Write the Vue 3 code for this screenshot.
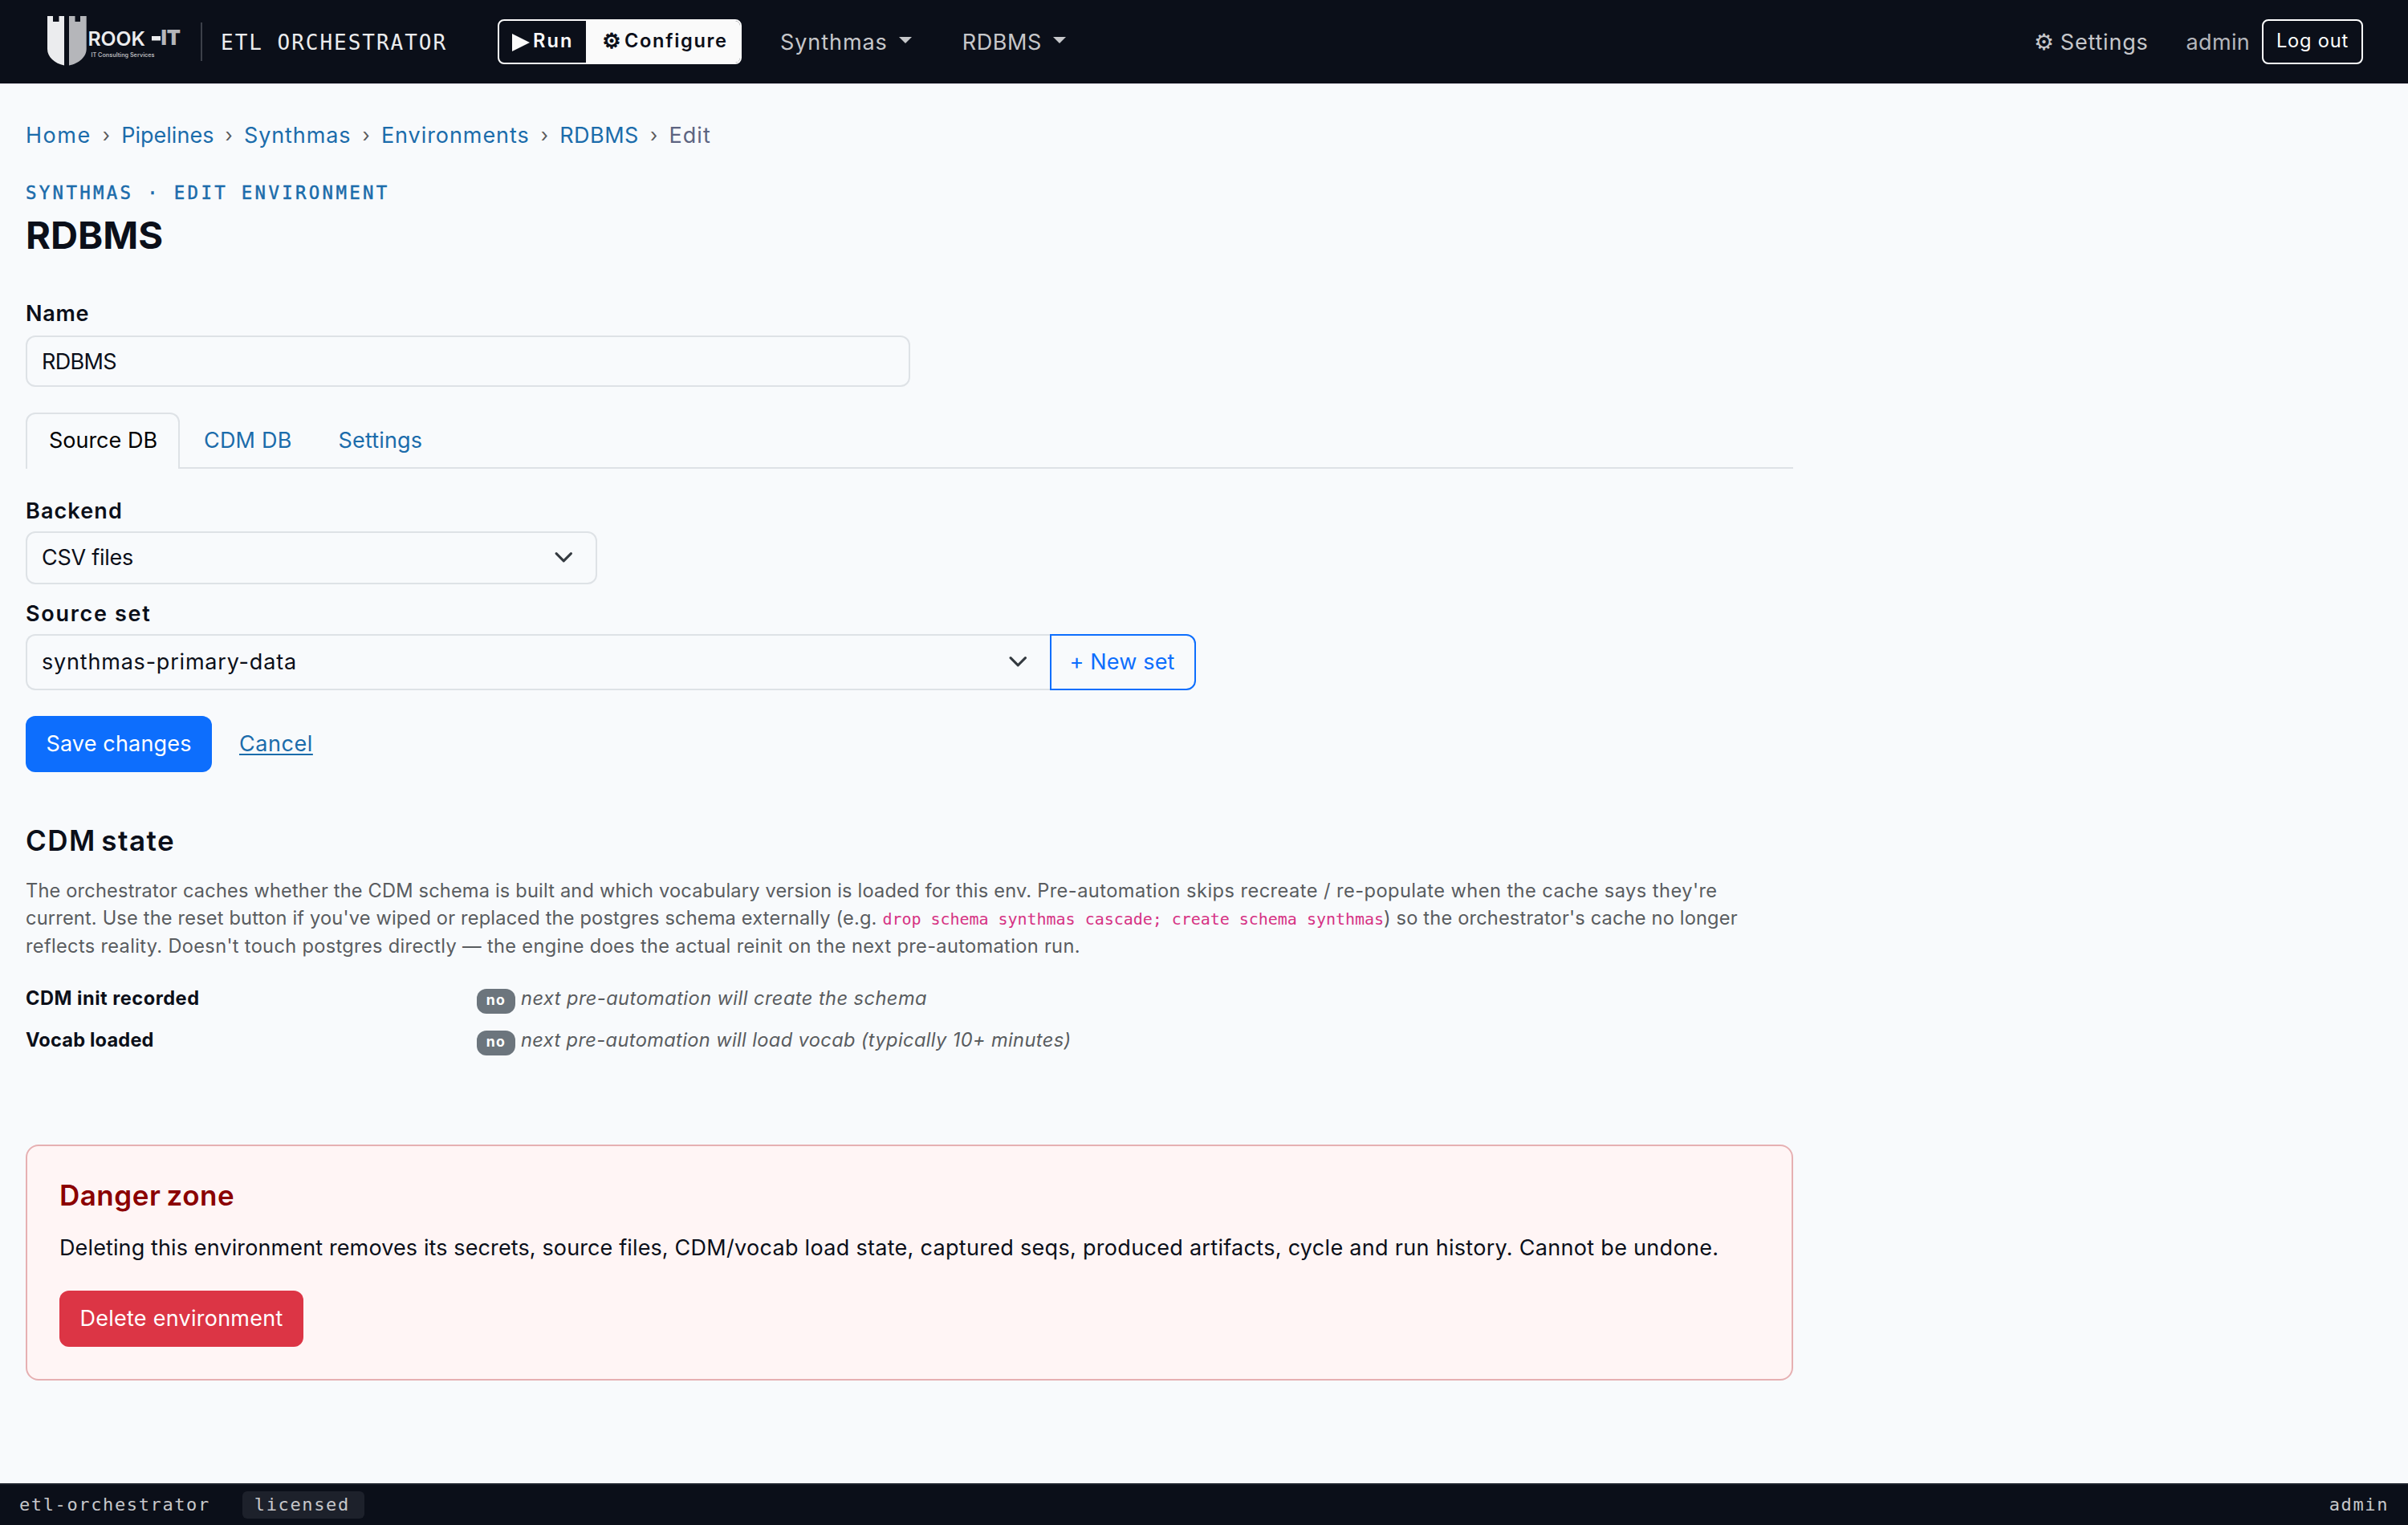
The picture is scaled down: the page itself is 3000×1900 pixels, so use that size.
<script setup>
import { ref } from 'vue'

const crumbs = [
  { label: 'Home', track: '1.5px' },
  { label: 'Pipelines', track: '0.02px' },
  { label: 'Synthmas', track: '0.9px' },
  { label: 'Environments', track: '0.93px' },
  { label: 'RDBMS', track: '0.5px' },
]

const menus = [
  { label: 'Synthmas', track: '0.93px' },
  { label: 'RDBMS', track: '0.56px' },
]

const tabs = [
  { id: 'source', label: 'Source DB', track: '0.01px' },
  { id: 'cdm', label: 'CDM DB', track: '0.2px' },
  { id: 'settings', label: 'Settings', track: '0.15px' },
]
const activeTab = ref('source')

const name = ref('RDBMS')

const state = [
  { label: 'CDM init recorded', track: '0.5px', hint: 'next pre-automation will create the schema', hintTrack: '0.45px' },
  { label: 'Vocab loaded', track: '0.18px', hint: 'next pre-automation will load vocab (typically 10+ minutes)', hintTrack: '0.38px' },
]
</script>

<template>
  <div class="page">
    <header class="navbar">
      <svg class="logo" width="168" height="64" viewBox="0 0 168 64">
        <path fill="#ebecee" d="M0 1h7v7h7.5V1H21v61.500C9 60 0 52 0 42z" />
        <path fill="#b5b6ba" d="M27 1h7.500v7H41V1h7.700v41C48.700 52 39 60.500 27 62.500z" />
        <text class="logo-name" x="50.500" y="37.500" textLength="71.500" lengthAdjust="spacingAndGlyphs">ROOK</text>
        <rect fill="#ebecee" x="130" y="26" width="11" height="5.500" />
        <text class="logo-it" x="141.500" y="37" textLength="24.500" lengthAdjust="spacingAndGlyphs">IT</text>
        <text class="logo-tag" x="54.500" y="51.500" textLength="79" lengthAdjust="spacingAndGlyphs">IT Consulting Services</text>
      </svg>
      <span class="rule"></span>
      <span class="product">ETL ORCHESTRATOR</span>

      <div class="mode">
        <button class="mode-run">
          <svg width="22" height="22" viewBox="0 0 22 22"><path fill="#fafafa" d="M0 0l22 11L0 22z" /></svg>
          <span>Run</span>
        </button>
        <button class="mode-conf"><span class="gear">⚙</span><span>Configure</span></button>
      </div>

      <a v-for="m in menus" :key="m.label" class="menu" :style="{ letterSpacing: m.track }">{{ m.label }}</a>

      <div class="right">
        <a class="settings"><span class="gear">⚙</span><span>Settings</span></a>
        <span class="user">admin</span>
        <button class="logout">Log out</button>
      </div>
    </header>

    <main>
      <nav class="crumbs">
        <template v-for="c in crumbs" :key="c.label">
          <a :style="{ letterSpacing: c.track }">{{ c.label }}</a>
          <span class="sep">›</span>
        </template>
        <span class="current">Edit</span>
      </nav>

      <div class="eyebrow">SYNTHMAS · EDIT ENVIRONMENT</div>
      <h1>RDBMS</h1>

      <label class="lbl lbl-name">Name</label>
      <input v-model="name" class="control" type="text" />

      <div class="tabs">
        <button
          v-for="t in tabs"
          :key="t.id"
          class="tab"
          :class="{ active: t.id === activeTab }"
          :style="{ letterSpacing: t.track }"
          @click="activeTab = t.id"
        >{{ t.label }}</button>
      </div>

      <label class="lbl lbl-backend">Backend</label>
      <div class="select backend">
        <span>CSV files</span>
        <svg class="chev" viewBox="0 0 16 16"><path d="m2 5 6 6 6-6" /></svg>
      </div>

      <label class="lbl lbl-set">Source set</label>
      <div class="group">
        <div class="select source">
          <span>synthmas-primary-data</span>
          <svg class="chev" viewBox="0 0 16 16"><path d="m2 5 6 6 6-6" /></svg>
        </div>
        <button class="new-set">+ New set</button>
      </div>

      <div class="actions">
        <button class="btn save">Save changes</button>
        <a class="cancel">Cancel</a>
      </div>

      <h2 class="state-title">CDM state</h2>
      <p class="about">
        <span class="tight">The orchestrator caches whether the CDM schema is built and which vocabulary version is loaded for this env. </span><span class="loose">Pre-automation skips recreate / re-populate when the cache says they're</span><br />
        <span class="tight">current. Use the reset button if you've wiped or replaced the postgres schema externally (e.g. </span><code>drop schema synthmas cascade; create schema synthmas</code><span class="tight">) so the orchestrator's cache no longer</span><br />
        <span class="last">reflects reality. Doesn't touch postgres directly — the engine does the actual reinit on the next pre-automation run.</span>
      </p>

      <dl class="state">
        <div v-for="s in state" :key="s.label" class="row">
          <dt :style="{ letterSpacing: s.track }">{{ s.label }}</dt>
          <dd><span class="badge">no</span><em :style="{ letterSpacing: s.hintTrack }">{{ s.hint }}</em></dd>
        </div>
      </dl>

      <section class="danger">
        <h2>Danger zone</h2>
        <p>Deleting this environment removes its secrets, source files, <span>CDM/vocab load state, captured seqs, produced artifacts, cycle and run history. Cannot be undone.</span></p>
        <button class="btn delete">Delete environment</button>
      </section>
    </main>

    <footer>
      <span>etl-orchestrator</span>
      <span class="pill">licensed</span>
      <span class="who">admin</span>
    </footer>
  </div>
</template>

<style>
body {
  margin: 0;
  background: #f8fafc;
}
</style>

<style scoped>
.page {
  display: flex;
  flex-direction: column;
  min-height: 1900px;
  font-family: Inter, 'Liberation Sans', sans-serif;
  font-size: 27px;
  line-height: 42px;
  color: #0b0f19;
}
.page * {
  box-sizing: border-box;
}
button,
input {
  margin: 0;
  padding: 0;
  font: inherit;
  letter-spacing: inherit;
  color: inherit;
  background: none;
  border: 0;
}
h1,
h2,
p,
dl,
dd {
  margin: 0;
}

/* navbar */
.navbar {
  display: flex;
  align-items: center;
  height: 106px;
  padding: 0 56px 0 59px;
  background: #0b0f19;
  border-bottom: 2px solid #f3f1fb;
  color: #c6c7ca;
}
.logo {
  display: block;
  margin-bottom: 2px;
}
.logo-name {
  font-size: 24px;
  font-weight: 600;
  fill: #ebecee;
}
.logo-it {
  font-size: 26px;
  font-weight: 900;
  fill: #b5b6ba;
}
.logo-tag {
  font-size: 7px;
  font-weight: 600;
  fill: #b5b6ba;
}
.rule {
  width: 2px;
  height: 48px;
  margin-left: 23px;
  background: #3c4049;
}
.product {
  width: 345px;
  margin-left: 23px;
  padding-top: 1px;
  font-family: 'DejaVu Sans Mono', monospace;
  font-size: 26px;
  letter-spacing: 1.98px;
  color: #ebecee;
  white-space: nowrap;
}
.mode {
  display: flex;
  width: 304px;
  height: 56px;
  border: 2px solid #fafafa;
  border-radius: 8px;
  overflow: hidden;
  font-size: 23.6px;
  font-weight: 600;
  color: #fafafa;
}
.mode button {
  display: flex;
  align-items: center;
  padding-bottom: 2px;
}
.mode-run {
  width: 108px;
  padding-left: 16px;
  letter-spacing: 2.1px;
}
.mode-run svg {
  margin-top: 3px;
  margin-right: 4px;
}
.mode-conf {
  flex: 1;
  padding-left: 16px;
  background: #fafafa;
  color: #0b0f19;
  letter-spacing: 1.67px;
}
.gear {
  font-family: 'DejaVu Sans', sans-serif;
  letter-spacing: 0;
}
.mode-conf .gear {
  width: 32px;
  font-size: 26px;
  -webkit-text-stroke: 1px currentColor;
}
.menu {
  display: flex;
  align-items: center;
  padding-top: 1px;
  margin-left: 48px;
}
.menu + .menu {
  margin-left: 63px;
}
.menu::after {
  content: '';
  margin: -5px 0 0 14px;
  border: 8.4px solid transparent;
  border-top-color: currentColor;
  border-bottom: 0;
}
.right {
  display: flex;
  align-items: center;
  margin-left: auto;
}
.settings {
  display: flex;
  padding-top: 1px;
  letter-spacing: 0.8px;
}
.settings .gear {
  width: 33px;
  font-size: 28px;
}
.user {
  padding-top: 1px;
  margin-left: 47px;
  letter-spacing: 0.31px;
  color: #b4b6bb;
}
.logout {
  width: 126px;
  height: 56px;
  margin-left: 15px;
  padding-bottom: 2px;
  border: 2px solid #fff;
  border-radius: 8px;
  font-size: 23.6px;
  letter-spacing: 0.8px;
  color: #fff;
}

/* content */
main {
  width: 2234px;
  padding: 42px 0 0 32px;
}
a {
  color: #1b6cab;
}
.navbar a {
  color: inherit;
}
.crumbs {
  display: flex;
}
.sep {
  width: 37.500px;
  text-align: center;
  font-size: 24px;
  color: #5b5b5b;
}
.current {
  letter-spacing: 1.1px;
  color: #5d6481;
}
.eyebrow {
  margin-top: 33px;
  font-family: 'DejaVu Sans Mono', monospace;
  font-size: 22.4px;
  line-height: 34px;
  letter-spacing: 3.32px;
  color: #1b6cab;
  -webkit-text-stroke: 0.5px currentColor;
}
h1 {
  margin-top: 6px;
  font-size: 47.2px;
  font-weight: 700;
  line-height: 60px;
}
.lbl {
  display: block;
  font-weight: 600;
}
.lbl-name {
  margin: 47px 0 6px;
  letter-spacing: 0.76px;
}
.lbl-backend {
  margin: 32px 0 4px;
  letter-spacing: 1.11px;
}
.lbl-set {
  margin: 16px 0 4px;
  letter-spacing: 1.7px;
}
.control {
  display: block;
  width: 1102px;
  height: 64px;
  padding: 0 18px;
  border: 2px solid #dee2e6;
  border-radius: 12px;
  letter-spacing: -0.65px;
}
.tabs {
  display: flex;
  height: 70px;
  margin-top: 32px;
  border-bottom: 2px solid #dee2e6;
}
.tab {
  height: 70px;
  padding: 0 26px 2px 28px;
  border: 2px solid transparent;
  border-bottom: 0;
  border-radius: 12px 12px 0 0;
  color: #1b6cab;
}
.tab.active {
  width: 192px;
  padding: 0 0 2px 1px;
  border-color: #dee2e6;
  background: #f8fafc;
  color: #000;
}
.select {
  display: flex;
  align-items: center;
  justify-content: space-between;
  padding: 0 28px 0 18px;
  border: 2px solid #dee2e6;
  border-radius: 12px;
}
.backend {
  width: 712px;
  height: 66px;
  letter-spacing: -0.26px;
}
.chev {
  width: 24.500px;
  height: 24.500px;
  margin-bottom: 2px;
  fill: none;
  stroke: #343a40;
  stroke-width: 2;
  stroke-linecap: round;
  stroke-linejoin: round;
}
.group {
  display: flex;
}
.source {
  width: 1276px;
  height: 70px;
  border-right: 0;
  border-radius: 12px 0 0 12px;
  letter-spacing: 0.8px;
}
.new-set {
  width: 182px;
  height: 70px;
  padding-right: 2px;
  border: 2px solid #0d6efd;
  border-radius: 0 12px 12px 0;
  letter-spacing: 0.18px;
  color: #0d6efd;
}
.actions {
  display: flex;
  align-items: center;
  margin-top: 32px;
}
.btn {
  height: 70px;
  border-radius: 12px;
  color: #fff;
}
.save {
  width: 232px;
  background: #0d6efd;
  letter-spacing: 0.17px;
}
.cancel {
  margin-left: 34px;
  letter-spacing: 0.55px;
  text-decoration: underline;
  text-decoration-thickness: 2px;
  text-underline-offset: 3px;
}
h2 {
  font-size: 35px;
  font-weight: 600;
  line-height: 44px;
}
.state-title {
  margin-top: 63px;
  letter-spacing: 1.5px;
  word-spacing: -4px;
}
.about {
  margin-top: 24px;
  font-size: 23.6px;
  line-height: 34.3px;
  white-space: nowrap;
  color: #595c5f;
}
.tight {
  letter-spacing: 0.18px;
}
.loose {
  letter-spacing: 0.46px;
}
.last {
  letter-spacing: 0.33px;
}
code {
  font-family: 'DejaVu Sans Mono', monospace;
  font-size: 20px;
  line-height: 1;
  letter-spacing: -0.03px;
  color: #d63384;
}
.state {
  margin-top: 22px;
  font-size: 23.6px;
}
.row {
  display: flex;
  align-items: center;
  height: 52px;
}
dt {
  width: 562px;
  font-weight: 700;
}
dd {
  display: flex;
  align-items: center;
  color: #595c5f;
}
.badge {
  width: 48px;
  height: 31px;
  margin-top: 7px;
  border-radius: 12px;
  background: #6c757d;
  color: #fff;
  font-size: 17.7px;
  font-weight: 700;
  line-height: 28px;
  letter-spacing: 1.2px;
  text-align: center;
}
em {
  margin-left: 7px;
}
.danger {
  height: 294px;
  margin-top: 104px;
  padding: 39px 40px 0;
  border: 2px solid #e6b0b2;
  border-radius: 16px;
  background: #fff5f5;
}
.danger h2 {
  letter-spacing: 0.5px;
  word-spacing: -2px;
  color: #8b0000;
}
.danger p {
  margin: 23px 0 32px;
  letter-spacing: 0.12px;
  white-space: nowrap;
}
.danger p span {
  letter-spacing: 0.3px;
}
.delete {
  width: 304px;
  background: #dc3545;
  letter-spacing: 0.26px;
}

/* status bar */
footer {
  display: flex;
  align-items: center;
  height: 52px;
  margin-top: auto;
  padding: 0 24px;
  border-top: 2px solid #1b202b;
  background: #0b0f19;
  font-family: 'DejaVu Sans Mono', monospace;
  font-size: 22px;
  letter-spacing: 1.62px;
  color: #c6c7ca;
}
.pill {
  width: 152px;
  height: 34px;
  margin-left: 40px;
  padding-left: 15px;
  border-radius: 6px;
  background: #1d212b;
  line-height: 34px;
}
.who {
  margin-left: auto;
}
</style>
